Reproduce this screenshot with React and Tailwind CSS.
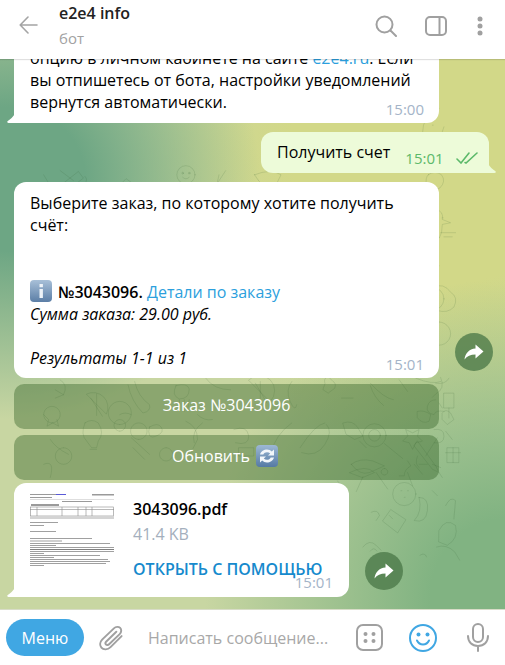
import React from "react";

const Doodles = () => (
  <svg className="absolute inset-0 w-full h-full" viewBox="0 0 505 665" fill="none" stroke="#2f5a2c" strokeOpacity="0.17" strokeWidth="1" strokeLinecap="round" strokeLinejoin="round">
    <path d="M20 135l16 12M24 150l18-14 6 8-18 14zM0 140l12 20" />
    <circle cx="172" cy="140" r="11" /><circle cx="168" cy="138" r="1" /><circle cx="176" cy="138" r="1" /><path d="M168 143q4 4 8 0" />
    <path d="M100 145l40 28-6 6-40-28zM32 155q8 6 4 20M40 168l14 6" />
    <path d="M70 165q26-14 44 4l6-6 2 18-14-2q-26 8-38-14zM85 172h1" />
    <path d="M122 172q14-20 30-6 8 8 4 22M135 160q-4 4 0 8" />
    <path d="M45 158h18v16H45zM45 158l9 8 9-8M50 150q4-4 0-8" />
    <path d="M186 170q8-12 10 8M212 140l-8 36M220 135l-26 40" />
    <path d="M255 140q20-8 32 0l-8 16q-14 2-24-16zM300 150q6 10 0 20M280 170l10-14" />
    <path d="M465 140q8-6 16 0 6 8-2 16-10 6-16-4-2-8 2-12z" /><path d="M450 125q20-5 40 0" />
    <path d="M478 60q-20 8-20 30t14 30q20-4 24-22M470 80h1M484 82q-4 14-10 18" />
    <path d="M6 190q14 6 8 24-10 0-14-10zM3 250l3 6 7 1-5 5 1 7-6-3-6 3" />
    <path d="M460 200q-2-20 14-18 10 2 8 12l10 4-10 2q0 22-14 22zM470 220v30M462 250h16M482 192h1" />
    <path d="M462 225a5 5 0 1 0 .1 0M452 240a5 5 0 1 0 .1 0M458 222q-2 8-8 18M460 222q2 6 2 12" />
    <path d="M480 210h18M484 215h10" />
    <circle cx="470" cy="290" r="14" /><path d="M452 288q6-14 18-12 14-6 22 6 10 6 4 18-8 8-20 4-14 4-22-6-6-6-2-10zM478 318a14 14 0 1 0 .1 0" />
    <path d="M4 320a16 16 0 1 1 .1 0M0 345q10-8 14 0t-4 14" />
    <path d="M455 130h28M445 110l8 6" />
    <path d="M20 388q10 6 4 18l-10 4M14 400l10 6M0 430l6 6-2 8 7-4 7 4-2-8" />
    <path d="M52 405a18 18 0 0 1 24 24zM57 410l14 22M64 405v26" />
    <path d="M110 390q4 18 18 28 2 8-8 10-14-14-18-34" />
    <path d="M92 430q6-4 14 0M115 460a10 10 0 1 1 .1 0M108 470l14 14" />
    <path d="M160 395q-6 12 4 16 12 0 12-12-2-8-16-4zM164 412v12M176 412l-2 12M170 412v14" />
    <path d="M196 386q10 14 30 14M186 430q8 8 18 6" />
    <path d="M248 388a18 18 0 0 1 26 26zM256 392l14 24M262 390v26" />
    <path d="M300 390q-8 10-2 24t8 4" />
    <path d="M340 392q-2-6 4-8l6 6q4 2 2 8l-8 6-6-4zM360 410h14" />
    <path d="M395 395q4 14 16 24M395 392q16 18 28 20M430 388l10 14" />
    <path d="M474 412q-8 0-10 8t8 10q2-6 12-4M490 386q-4 8-16 6" />
    <path d="M480 385q6 14-6 20l-4 4M450 386q20 8 30 4" />
    <path d="M484 404h12v18h-12zM490 422v12" />
    <path d="M10 440a10 10 0 1 1 .1 0M24 470a10 10 0 1 0 .1 0M8 460q6 10 22 18" />
    <path d="M50 440q-6 14 2 22l6 8h6l2-8q8-10 0-22-8-6-16 0zM56 472h8" />
    <path d="M92 442a14 14 0 1 1 .1 0M92 450a7 7 0 1 1 .1 0M106 458l22 20" />
    <path d="M128 445q10-6 14 0t-4 10 -10 0 0-10zM148 470a8 8 0 1 0 .1 0" />
    <path d="M172 438q14 6 14 22l-8 16M192 440q-14 10-10 24" />
    <path d="M230 448q16-6 18 8 0 12-16 8M236 470h18v10h-18z" />
    <path d="M300 440q-20 14-26 38M340 440q-12 2-30 30M342 442q8 8-2 24t-28 10" />
    <path d="M362 440q12-4 18 6l6 10-10 4-10-6zM382 462l8 8" />
    <circle cx="400" cy="455" r="14" /><circle cx="400" cy="455" r="7" /><path d="M412 465l22 18" />
    <path d="M438 448l8 4 8-4-2 8 6 6-8 2-4 8-4-8-8-2 6-6zM462 480l14-22" />
    <path d="M472 448q12-2 12 8t-12 8M486 450l8 10M452 426q8-2 16 4l-2 8q-8 4-14-4z" />
    <path d="M482 428q4-6 10 0l4 8-8 6-6-6zM478 416l4 6" />
    <path d="M452 462l22 30 4 8-8-4-22-28zM488 470h14v18h-14zM486 476h18M495 470v18" />
    <path d="M372 490q10-8 26-4l14 6-18 8q-12 4-22-10zM412 495a4 4 0 1 0 .1 0" />
    <path d="M440 486l4 6q-8 4-8 12h-6M452 480q-4 10 2 14" />
    <path d="M370 500q20-10 30 0l-14 6zM402 500l14 20M386 505l-8 18" />
    <path d="M448 490l10 12M454 490h10M440 500l6 16" />
    <path d="M470 490l10 4M478 500l4 6" />
    <circle cx="436" cy="526" r="14" /><path d="M432 522h1M440 522h1M436 530h1" />
    <path d="M454 530q12 0 10 16t-16 12q10-10 6-28zM470 522l6 6" />
    <path d="M420 545l18 12-10 16-18-14zM418 552l4 4" />
    <path d="M386 590q8-10 16-2l6 6M395 595q4-6 8 0M396 548q8-4 10 4l-4 6" />
    <path d="M478 570q8-16 20-6 4 16-10 24l-10-4zM486 540q6-12 12-6l-2 22" />
    <path d="M475 590q12-4 22 6l6 10M455 600q6-4 8 2" />
    <path d="M0 490q14-6 8 16M20 560q-8 6-14 2M0 590q10-8 14 2" />
    <path d="M355 510q6 4 4 12M358 540q-4 6 2 10M355 596l4 6" />
  </svg>
);

const Tail = ({ color = "#ffffff" }) => (
  <svg className="absolute left-[-7px] bottom-0" width="9" height="12" viewBox="0 0 9 12">
    <path d="M9 0v12H1.5C0 12-.2 10.800.8 10 4.500 7.200 7.500 5 9 0z" fill={color} />
  </svg>
);

const Forward = () => (
  <div className="w-[38px] h-[38px] mb-[7px] rounded-full bg-[#487545]/75 flex items-center justify-center shrink-0">
    <svg width="20" height="16" viewBox="0 0 20 16"><path d="M11.500 0.500L19.500 7.500 11.500 14.500V10.500C6.500 10.500 3 12 0.500 15.500 1.200 9.500 5 5 11.500 4.500z" fill="#ffffff" /></svg>
  </div>
);

const InfoEmoji = () => (
  <svg className="inline-block align-[-4px] mr-[6px]" width="22" height="22" viewBox="0 0 22 22">
    <defs><linearGradient id="i1" x1="0" y1="0" x2="0" y2="1"><stop offset="0" stopColor="#a8c0d8" /><stop offset="1" stopColor="#5b7ea6" /></linearGradient></defs>
    <rect width="22" height="22" rx="4" fill="url(#i1)" />
    <rect x="9.500" y="9" width="3.400" height="9" fill="#eef3f8" />
    <rect x="9.500" y="4" width="3.400" height="3.200" fill="#eef3f8" />
  </svg>
);

const RefreshEmoji = () => (
  <svg className="inline-block align-[-5px] ml-[6px]" width="22" height="22" viewBox="0 0 22 22">
    <defs><linearGradient id="i2" x1="0" y1="0" x2="0" y2="1"><stop offset="0" stopColor="#9db8d4" /><stop offset="1" stopColor="#557aa4" /></linearGradient></defs>
    <rect width="22" height="22" rx="4" fill="url(#i2)" />
    <path d="M4 9.500C5 6 8 4.500 11 4.500c2 0 3.600.8 4.800 2L18 4.500V10.500h-6l2.200-2.100C13.400 7.600 12.300 7.200 11 7.200c-1.700 0-3 .8-3.700 2.300z" fill="#f2f6fa" />
    <path d="M18 12.500C17 16 14 17.500 11 17.500c-2 0-3.600-.8-4.800-2L4 17.500V11.500h6l-2.200 2.100C8.600 14.400 9.700 14.800 11 14.800c1.700 0 3-.8 3.700-2.300z" fill="#f2f6fa" />
  </svg>
);

const Thumb = () => (
  <svg width="86" height="72" viewBox="0 0 86 72" className="block blur-[0.3px]">
    <g fill="#9a9a9a">
      <rect x="0" y="0" width="26" height="1" /><rect x="26" y="0" width="10" height="1" fill="#5a5ad8" /><rect x="62" y="0" width="22" height="1.500" />
      <rect x="0" y="3" width="22" height="1" />
      <rect x="32" y="7" width="30" height="1" />
      <rect x="0" y="5" width="84" height=".6" fill="#c8c8c8" />
    </g>
    <g fill="none" stroke="#8a8a8a" strokeWidth=".6">
      <rect x=".5" y="13" width="83" height="9" />
      <path d="M0 15.500h84M7 13v9M32 13v9M48 13v9M56 13v9M62 13v9" />
    </g>
    <rect x="0" y="22" width="84" height="3" fill="#d4d4d4" />
    <rect x="1" y="10" width="28" height="2" fill="#9a9a9a" />
    <g fill="#a0a0a0">
      <rect x="0" y="28" width="28" height="1" /><rect x="0" y="31" width="14" height="1" />
      <rect x="0" y="37" width="26" height="1" />
      <rect x="0" y="44" width="62" height="1" /><rect x="0" y="46.500" width="32" height="1" />
      <rect x="0" y="49" width="80" height="1" /><rect x="0" y="51" width="26" height="1" />
      <rect x="0" y="53" width="84" height="1" /><rect x="0" y="55" width="84" height="1" fill="#808080" /><rect x="0" y="57" width="84" height="1" />
      <rect x="0" y="59" width="14" height="1" />
      <rect x="0" y="61" width="70" height="1" /><rect x="0" y="63" width="24" height="1" />
      <rect x="0" y="65" width="78" height="1" /><rect x="0" y="67" width="80" height="1" /><rect x="0" y="69" width="76" height="1" /><rect x="0" y="71" width="14" height="1" />
    </g>
  </svg>
);

export default function App() {
  return (
    <div className="w-[505px] h-[665px] flex flex-col overflow-hidden bg-white text-[16px] leading-[22px] text-black font-['Open_Sans',sans-serif]">
      <header className="relative z-10 h-[59px] shrink-0 bg-white flex items-center pl-[19px] pr-[21px] shadow-[0_1px_1px_rgba(0,0,0,0.12)]">
        <svg width="19" height="18" viewBox="0 0 19 18" fill="none" stroke="#a4a4a4" strokeWidth="1.600" strokeLinecap="round" strokeLinejoin="round" className="shrink-0 mt-[-9px]">
          <path d="M18 9H1.200M9 1L1.200 9 9 17" />
        </svg>
        <div className="ml-[21px] flex-1 self-start pt-[2px]">
          <div className="font-semibold leading-[22px] text-[#222222]">e2e4 info</div>
          <div className="text-[15px] leading-[20px] mt-[4px] text-[#a2a2a2]">бот</div>
        </div>
        <svg width="22" height="22" viewBox="0 0 22 22" fill="none" stroke="#a0a0a0" strokeWidth="2" strokeLinecap="round" className="mr-[28px] mt-[-7px]">
          <circle cx="9.500" cy="9.500" r="8" /><path d="M15.500 15.500L21 21" />
        </svg>
        <svg width="22" height="20" viewBox="0 0 22 20" fill="none" stroke="#a0a0a0" strokeWidth="2" className="mr-[29px] mt-[-7px]">
          <rect x="1" y="1" width="20" height="18" rx="4" /><path d="M14.500 1v18" />
        </svg>
        <svg width="8" height="20" viewBox="0 0 8 20" fill="#a0a0a0" className="mt-[-7px]">
          <circle cx="4" cy="3" r="2.500" /><circle cx="4" cy="10" r="2.500" /><circle cx="4" cy="17" r="2.500" />
        </svg>
      </header>

      <main className="relative flex-1 min-h-0 overflow-hidden flex flex-col justify-end pb-[12px] pl-[14px] bg-[radial-gradient(ellipse_250px_240px_at_10px_120px,#6da684_30%,rgba(109,166,132,0)_100%),radial-gradient(ellipse_300px_320px_at_505px_540px,#81b382_25%,rgba(129,179,130,0)_100%),radial-gradient(ellipse_330px_300px_at_440px_90px,#d2d888_45%,rgba(210,216,136,0)_100%),linear-gradient(#c8d6a2,#c8d6a2)]">
        <Doodles />

        <div className="relative flex flex-col items-start">
          <div className="relative w-[425px] bg-white rounded-[12px] rounded-bl-none px-[16px] pt-[10px] pb-[10px]">
            <div>опцию в личном кабинете на сайте <span className="text-[#2c9fdd]">e2e4.ru</span>. Если вы отпишетесь от бота, настройки уведомлений вернутся автоматически.</div>
            <span className="absolute right-[15px] bottom-[4px] text-[15px] leading-[20px] text-[#a4b4c8]">15:00</span>
            <Tail />
          </div>

          <div className="relative self-start ml-[247px] mt-[9px] w-[228px] h-[41px] bg-[#edfbd9] rounded-[12px] rounded-br-none pl-[16px] pt-[9px] flex">
            <span className="leading-[22px]">Получить счет</span>
            <span className="ml-[15px] mt-[7px] text-[15px] leading-[20px] text-[#5cb96a]">15:01</span>
            <svg width="22" height="12" viewBox="0 0 22 12" fill="none" stroke="#5cb96a" strokeWidth="1.600" strokeLinecap="round" className="ml-[12px] mt-[11px] shrink-0">
              <path d="M1 7l4 4L13 1M9 10.500l1 .5L21 1" />
            </svg>
            <svg className="absolute right-[-7px] bottom-0" width="9" height="12" viewBox="0 0 9 12">
              <path d="M0 0v12h7.500C9 12 9.200 10.800 8.200 10 4.500 7.200 1.500 5 0 0z" fill="#edfbd9" />
            </svg>
          </div>

          <div className="flex items-end gap-[16px] mt-[9px]">
            <div className="relative w-[425px] bg-white rounded-[12px] px-[16px] pt-[10px] pb-[9px]">
              <div>Выберите заказ, по которому хотите получить счёт:</div>
              <div className="h-[44px]" />
              <div><InfoEmoji /><span className="font-[550]">№3043096.</span> <span className="text-[#2c9fdd]">Детали по заказу</span></div>
              <div className="italic">Сумма заказа: 29.00 руб.</div>
              <div className="h-[22px]" />
              <div className="italic">Результаты 1-1 из 1</div>
              <span className="absolute right-[15px] bottom-[4px] text-[15px] leading-[20px] text-[#a4b4c8]">15:01</span>
            </div>
            <Forward />
          </div>

          <button className="mt-[6px] w-[425px] h-[45px] pb-[3px] rounded-[10px] bg-[#2f5f22]/40 text-white font-medium flex items-center justify-center">Заказ №3043096</button>
          <button className="mt-[6px] w-[425px] h-[45px] pb-[3px] pr-[3px] rounded-[10px] bg-[#2f5f22]/40 text-white font-medium flex items-center justify-center">Обновить<RefreshEmoji /></button>

          <div className="flex items-end gap-[16px] mt-[3px]">
            <div className="relative w-[335px] h-[114px] bg-white rounded-[12px] rounded-bl-none flex pl-[16px] pt-[11px]">
              <div className="w-[103px] shrink-0"><Thumb /></div>
              <div className="flex flex-col">
                <div className="font-[550] mt-[4px]">3043096.pdf</div>
                <div className="text-[#a4afbd] mt-[3px]">41.4 KB</div>
                <div className="text-[#168acd] font-semibold mt-[13px] whitespace-nowrap">ОТКРЫТЬ С ПОМОЩЬЮ</div>
              </div>
              <span className="absolute right-[16px] bottom-[5px] text-[15px] leading-[20px] text-[#a4b4c8]">15:01</span>
              <Tail />
            </div>
            <Forward />
          </div>
        </div>
      </main>

      <footer className="h-[56px] shrink-0 bg-white flex items-center pl-[6px] border-t border-[#d8dcc8]">
        <button className="w-[78px] h-[37px] rounded-full bg-[#40a7e3] text-white font-medium text-[16px]">Меню</button>
        <svg width="25" height="28" viewBox="0 0 26 28" fill="none" stroke="#a0a0a0" strokeWidth="2" strokeLinecap="round" className="ml-[15px]">
          <path d="M23.500 12L12 23.500c-3 3-7.500 3-9.500.5s-1.500-6 1-8.500L15.500 4c2-2 5-2 6.500-.5s1.500 4.500-.5 6.500L10.500 20.500c-1 1-2.500 1-3.200.3s-.7-2.200.3-3.200L18 7.500" />
        </svg>
        <span className="ml-[24px] text-[#a8a8a8] w-[208px] shrink-0 whitespace-nowrap">Написать сообщение...</span>
        <svg width="27" height="27" viewBox="0 0 27 27" fill="none" stroke="#a0a0a0" strokeWidth="2">
          <rect x="1" y="1" width="25" height="25" rx="6" />
          <g fill="#a0a0a0" stroke="none"><circle cx="9.500" cy="10" r="2" /><circle cx="17.500" cy="10" r="2" /><circle cx="9.500" cy="17" r="2" /><circle cx="17.500" cy="17" r="2" /></g>
        </svg>
        <svg width="28" height="28" viewBox="0 0 28 28" fill="none" stroke="#40a7e3" strokeWidth="2" strokeLinecap="round" className="ml-[26px]">
          <circle cx="14" cy="14" r="13" /><path d="M8 16.500c1.500 3 3.500 4 6 4s4.500-1 6-4" />
          <g fill="#40a7e3" stroke="none"><circle cx="9.500" cy="10.500" r="2" /><circle cx="18.500" cy="10.500" r="2" /></g>
        </svg>
        <svg width="22" height="29" viewBox="0 0 22 29" fill="none" stroke="#a0a0a0" strokeWidth="2" strokeLinecap="round" className="ml-[30px]">
          <rect x="6" y="1" width="10" height="18" rx="5" /><path d="M1 13c0 6 4 10 10 10s10-4 10-10M11 23v5" />
        </svg>
      </footer>
    </div>
  );
}
